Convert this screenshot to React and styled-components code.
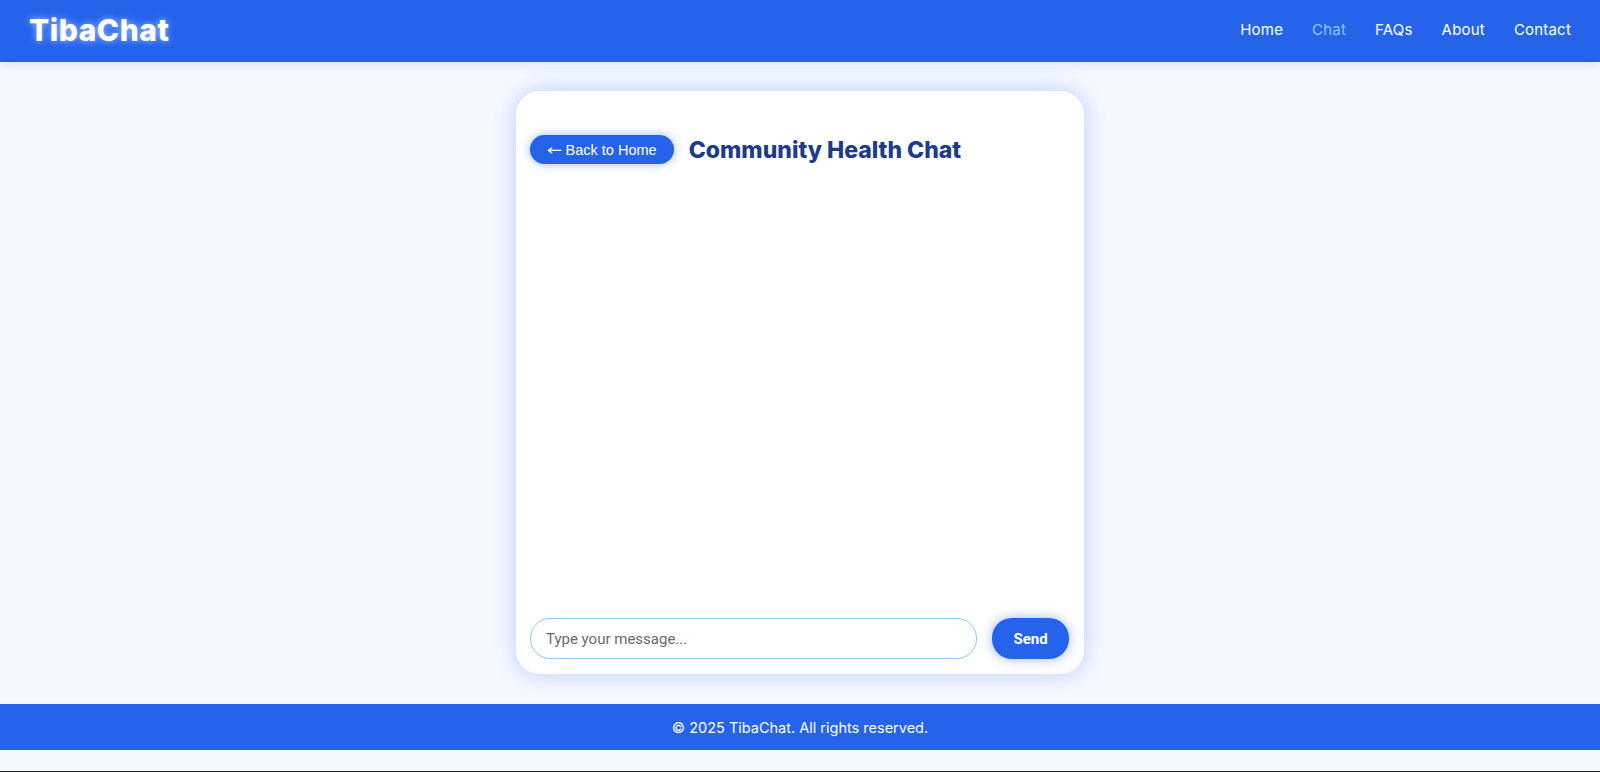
import React, { useState } from "react";
import styled, { createGlobalStyle } from "styled-components";

const GlobalStyle = createGlobalStyle`
  * { box-sizing: border-box; }
  html, body {
    margin: 0;
    padding: 0;
    background: #f3f7ff;
    font-family: "Inter", "Open Sans", sans-serif;
  }
`;

const Page = styled.div`
  display: flex;
  flex-direction: column;
  min-height: 772px;
  background: #f4f8ff;
`;

const Header = styled.header`
  height: 62px;
  background: #2563eb;
  display: flex;
  align-items: center;
  justify-content: space-between;
  padding: 0 29px 3px;
  box-shadow: 0 2px 12px rgba(30, 64, 175, 0.12);
  position: relative;
  z-index: 1;
`;

const Logo = styled.div`
  color: #ffffff;
  font-family: "Inter", sans-serif;
  font-weight: 800;
  font-size: 30px;
  letter-spacing: 0.5px;
  text-shadow: 0 0 7px rgba(255, 255, 255, 0.6);
`;

const Nav = styled.nav`
  display: flex;
  gap: 29px;
`;

const NavLink = styled.a`
  color: ${(p) => (p.$active ? "#93c5fd" : "#ffffff")};
  font-family: "Inter", sans-serif;
  font-size: 15px;
  font-weight: 400;
  letter-spacing: 0.2px;
  text-decoration: none;
  cursor: pointer;
`;

const Main = styled.main`
  flex: 1;
  display: flex;
  justify-content: center;
  padding: 29px 0 30px;
`;

const Card = styled.section`
  width: 568px;
  height: 583px;
  background: #ffffff;
  border-radius: 24px;
  box-shadow: 0 0 22px rgba(37, 99, 235, 0.28);
  display: flex;
  flex-direction: column;
  padding: 16px 15px 15px 14px;
`;

const CardHead = styled.div`
  display: flex;
  align-items: center;
  gap: 15px;
  margin-top: 28px;
`;

const BackButton = styled.button`
  height: 29px;
  padding: 0 17px;
  border: none;
  border-radius: 999px;
  background: #2563eb;
  color: #ffffff;
  font-family: "Liberation Sans", Arial, sans-serif;
  font-size: 14.5px;
  box-shadow: 0 0 10px rgba(37, 99, 235, 0.45);
  cursor: pointer;
`;

const Arrow = styled.span`
  font-family: "DejaVu Sans", sans-serif;
  font-size: 15px;
  display: inline-block;
  transform: scaleX(1.2);
  margin: 0 5px 0 1px;
`;

const Title = styled.h2`
  margin: 0;
  color: #1e3a8a;
  font-family: "Inter", sans-serif;
  font-weight: 800;
  font-size: 23px;
`;

const Messages = styled.div`
  flex: 1;
`;

const InputRow = styled.form`
  display: flex;
  align-items: center;
  gap: 15px;
`;

const MessageInput = styled.input`
  flex: 1;
  height: 41px;
  border: 1px solid #93c5fd;
  border-radius: 20px;
  padding: 0 12px 0 15px;
  font-family: "Roboto", sans-serif;
  font-size: 15px;
  color: #333;
  outline: none;
  &::placeholder { color: #6b6b6b; }
`;

const SendButton = styled.button`
  width: 77px;
  height: 41px;
  border: none;
  border-radius: 20px;
  background: #2563eb;
  color: #ffffff;
  font-family: "Roboto", sans-serif;
  font-weight: 700;
  font-size: 15px;
  box-shadow: 0 0 12px rgba(37, 99, 235, 0.45);
  cursor: pointer;
`;

const Footer = styled.footer`
  height: 46px;
  background: #2563eb;
  color: #ffffff;
  display: flex;
  align-items: center;
  justify-content: center;
  font-family: "Inter", sans-serif;
  font-size: 14.5px;
`;

const Tail = styled.div`
  height: 22px;
  border-bottom: 1px solid #1f1f24;
`;

export default function App() {
  const [text, setText] = useState("");
  const links = ["Home", "Chat", "FAQs", "About", "Contact"];
  return (
    <Page>
      <GlobalStyle />
      <Header>
        <Logo>TibaChat</Logo>
        <Nav>
          {links.map((l) => (
            <NavLink key={l} $active={l === "Chat"}>{l}</NavLink>
          ))}
        </Nav>
      </Header>
      <Main>
        <Card>
          <CardHead>
            <BackButton><Arrow>←</Arrow>Back to Home</BackButton>
            <Title>Community Health Chat</Title>
          </CardHead>
          <Messages />
          <InputRow onSubmit={(e) => e.preventDefault()}>
            <MessageInput
              placeholder="Type your message..."
              value={text}
              onChange={(e) => setText(e.target.value)}
            />
            <SendButton type="submit">Send</SendButton>
          </InputRow>
        </Card>
      </Main>
      <Footer>© 2025 TibaChat. All rights reserved.</Footer>
      <Tail />
    </Page>
  );
}
